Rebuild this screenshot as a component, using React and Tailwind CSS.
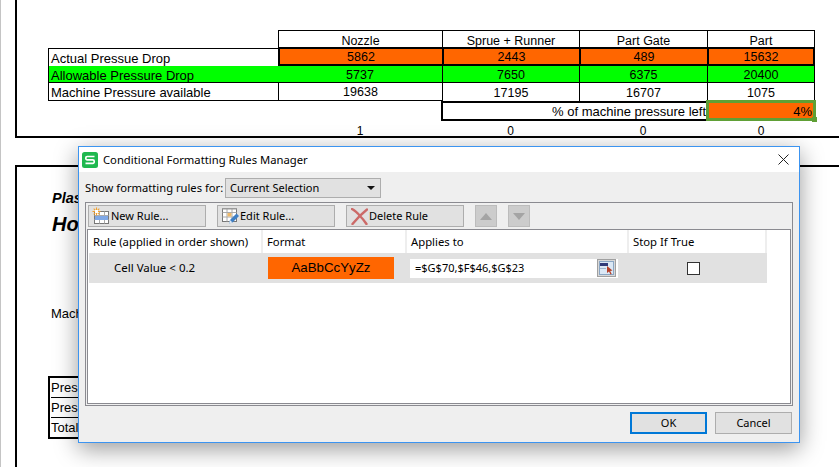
const sheet = { fontFamily: '"Liberation Sans", Arial, sans-serif' };
const ui = { fontFamily: '"Noto Sans", "Open Sans", sans-serif' };

function SheetIcon() {
  return (
    <svg width="16" height="16" viewBox="0 0 16 16">
      <rect width="16" height="16" rx="2.5" fill="#1fb84f" />
      <path d="M12.5 4.5H5.2a1.4 1.4 0 0 0-1.4 1.4v.6a1.4 1.4 0 0 0 1.4 1.4h5.6a1.4 1.4 0 0 1 1.4 1.4v.6a1.4 1.4 0 0 1-1.4 1.4H3.5" fill="none" stroke="#fff" strokeWidth="1.7" />
    </svg>
  );
}

function NewRuleIcon() {
  return (
    <svg width="18" height="18" viewBox="0 0 18 18">
      <rect x="2.5" y="4.5" width="14" height="12" fill="#fff" stroke="#777" />
      <path d="M2.5 8.5h14M2.5 12.5h14M7.5 4.5v12M12.5 4.5v12" stroke="#aaa" />
      <rect x="3" y="9" width="13" height="4" fill="#7fa8e6" />
      <path d="M4.5 0.5v8M0.5 4.5h8M1.7 1.7l5.6 5.6M7.3 1.7L1.7 7.3" stroke="#f0a030" strokeWidth="1.1" />
      <rect x="3" y="3" width="3" height="3" fill="#fff" />
    </svg>
  );
}

function EditRuleIcon() {
  return (
    <svg width="19" height="18" viewBox="0 0 19 18">
      <rect x="1.5" y="1.5" width="14" height="13" fill="#fff" stroke="#777" />
      <path d="M1.5 5.5h14M1.5 10h14M6 1.5v13M11 1.5v13" stroke="#aaa" />
      <rect x="6.5" y="6" width="4" height="3.5" fill="#eeb96a" />
      <rect x="1" y="1" width="15" height="1.5" fill="#999" />
      <path d="M8 16.5l1-3.5 6.5-6.5 2.5 2.5-6.5 6.5z" fill="#3f7fc4" />
      <path d="M8 16.5l1-3.5 2.5 2.5z" fill="#dfe8f2" />
    </svg>
  );
}

function DeleteIcon() {
  return (
    <svg width="17" height="17" viewBox="0 0 17 17">
      <path d="M1 1c3 1.500 6 4.500 8.500 7.500M16 1.500C11.500 5 6 10.500 1.500 16M9 8c2.500 2.500 4.500 5 6.500 8" fill="none" stroke="#cc6a68" strokeWidth="2.400" strokeLinecap="round" />
    </svg>
  );
}

function Triangle({ down }) {
  return (
    <svg width="12" height="7" viewBox="0 0 12 7">
      <path d={down ? "M0 0h12L6 7z" : "M0 7h12L6 0z"} fill="#a4a4a4" />
    </svg>
  );
}

function RefIcon() {
  return (
    <svg width="15" height="14" viewBox="0 0 15 14">
      <rect width="15" height="14" fill="#dbe8f5" />
      <rect x="0.5" y="0.5" width="14" height="13" fill="none" stroke="#8aa6c4" />
      <rect x="1" y="2" width="8" height="3" fill="#303a78" />
      <rect x="1" y="7" width="6" height="1" fill="#9fb4cc" />
      <path d="M8 5l5.500 4.500-2.300.4 1.500 3-1.200.6-1.500-3-2 1.500z" fill="#b5402a" />
    </svg>
  );
}

function ToolButton({ icon, label }) {
  return (
    <div className="flex h-[22px] w-[118px] items-center border border-[#adadad] bg-[#e1e1e1] pl-[2px] text-[11px] text-black">
      <span className="flex w-[20px] justify-center">{icon}</span>
      <span>{label}</span>
    </div>
  );
}

function Row({ children, className }) {
  return <div className={`grid w-[767px] grid-cols-[230px_164px_137px_128px_108px] ${className}`}>{children}</div>;
}

export default function App() {
  return (
    <div className="relative h-[467px] w-[839px] overflow-hidden border-l border-[#c4c4c4] bg-white text-black" style={sheet}>
      <div className="absolute left-[-1px] top-[101px] h-[19px] w-[1px] bg-[#5f9f35]" />

      {/* upper sheet block */}
      <div className="ml-[14px] h-[138px] border-b-2 border-l-2 border-black pl-[31px] pt-[30px] text-[12.500px] leading-none">
        <Row className="h-[17px]">
          <div />
          <div className="flex items-center justify-center border-l border-t border-black pt-[4px]">Nozzle</div>
          <div className="flex items-center justify-center border-l border-t border-black pt-[4px]">Sprue + Runner</div>
          <div className="flex items-center justify-center border-l border-t border-black pt-[4px]">Part Gate</div>
          <div className="flex items-center justify-center border-x border-t border-black pt-[4px]">Part</div>
        </Row>
        <Row className="h-[19px]">
          <div className="mt-px flex items-center border-l border-t border-black pl-[2px] pt-[2px] text-[13px]">Actual Pressue Drop</div>
          <div className="flex items-center justify-center border-y-2 border-l-2 border-black bg-[#ff6600] pt-[2px]">5862</div>
          <div className="flex items-center justify-center border-y-2 border-l-2 border-black bg-[#ff6600] pt-[2px]">2443</div>
          <div className="flex items-center justify-center border-y-2 border-l-2 border-black bg-[#ff6600] pt-[2px]">489</div>
          <div className="flex items-center justify-center border-2 border-black bg-[#ff6600] pt-[2px]">15632</div>
        </Row>
        <Row className="h-[17px]">
          <div className="flex items-center border-b border-l border-black bg-[#00ff00] pl-[2px] pt-[2px] text-[13px]">Allowable Pressure Drop</div>
          <div className="flex items-center justify-center border-b border-black bg-[#00ff00] pt-[3px]">5737</div>
          <div className="flex items-center justify-center border-b border-l border-black bg-[#00ff00] pt-[3px]">7650</div>
          <div className="flex items-center justify-center border-b border-l border-black bg-[#00ff00] pt-[3px]">6375</div>
          <div className="flex items-center justify-center border-x border-b border-black bg-[#00ff00] pt-[3px]">20400</div>
        </Row>
        <Row className="h-[18px]">
          <div className="flex items-center border-b border-l border-black pl-[2px] pt-[2px] text-[13px]">Machine Pressure available</div>
          <div className="flex items-center justify-center border-b border-l border-black pt-[2px]">19638</div>
          <div className="flex items-center justify-center border-l border-black pt-[2px]">17195</div>
          <div className="flex items-center justify-center border-l border-black pt-[2px]">16707</div>
          <div className="flex items-center justify-center border-x border-black pt-[2px]">1075</div>
        </Row>
        <Row className="h-[18px]">
          <div />
          <div />
          <div className="col-span-2 -ml-px flex items-center justify-end border-2 border-r-0 border-black pr-[1px] pt-[1px] text-[13px]">% of machine pressure left</div>
          <div className="relative -ml-px -mt-px flex h-[21px] w-[110px] items-center justify-end border-[3px] border-[#5f9f35] bg-[#ff6600] pr-[1px] pt-[1px] text-[13px]">
            4%
            <div className="absolute bottom-[-4px] right-[-4px] h-[5px] w-[5px] bg-[#5f9f35]" />
          </div>
        </Row>
        <Row className="h-[17px] text-[12px]">
          <div />
          <div className="flex items-center justify-center pt-[6px]">1</div>
          <div className="flex items-center justify-center pt-[6px]">0</div>
          <div className="flex items-center justify-center pt-[6px]">0</div>
          <div className="flex items-center justify-center pt-[6px]">0</div>
        </Row>
      </div>

      {/* lower sheet block, mostly covered by the dialog */}
      <div className="ml-[14px] mt-[27px] h-[302px] border-l-2 border-t-2 border-black pl-[35px] pt-[22px]">
        <div className="text-[14.500px] font-bold italic leading-[18px]">Plas</div>
        <div className="mt-[5px] text-[20px] font-bold italic leading-[24px]">Ho</div>
        <div className="-ml-px mt-[70px] text-[13px] leading-[16px]">Mach</div>
        <div className="-ml-[4px] mt-[54px] w-[200px] border-2 border-black pl-[1px] text-[13px] leading-[19px]">
          <div className="h-[20px] border-b border-black">Pres</div>
          <div className="h-[20px] border-b border-black">Pres</div>
          <div className="h-[19px]">Total</div>
        </div>
      </div>

      {/* dialog */}
      <div className="absolute left-[77px] top-[146px] h-[297px] w-[722px] border border-[#3c94f0] bg-[#efefef] text-[11.500px] text-black shadow-[0_6px_22px_rgba(0,0,0,0.4)]" style={ui}>
        <div className="flex h-[25px] items-center bg-white pl-[3px] pr-[10px]">
          <SheetIcon />
          <span className="ml-[5px] flex-1 text-[11.250px] leading-none">Conditional Formatting Rules Manager</span>
          <svg width="11" height="11" viewBox="0 0 11 11"><path d="M0.500 0.500l10 10M10.500 0.500l-10 10" stroke="#222" strokeWidth="1" /></svg>
        </div>
        <div className="ml-[6px] mt-[6px] flex h-[20px] items-center">
          <span className="w-[140px] whitespace-nowrap text-[11.200px]">Show formatting rules for:</span>
          <div className="flex h-[20px] w-[156px] items-center justify-between border border-[#adadad] bg-[#e1e1e1] pl-[4px] pr-[5px] text-[11px]">
            <span>Current Selection</span>
            <svg width="8" height="4" viewBox="0 0 8 4"><path d="M0 0h8L4 4z" fill="#111" /></svg>
          </div>
        </div>
        <div className="mx-[6px] mt-[4px] h-[204px] border border-[#8a8a90]">
          <div className="flex h-[26px] gap-[11px] pl-[2px] pt-[2px]">
            <ToolButton icon={<NewRuleIcon />} label="New Rule..." />
            <ToolButton icon={<EditRuleIcon />} label="Edit Rule..." />
            <ToolButton icon={<DeleteIcon />} label="Delete Rule" />
            <div className="flex h-[22px] w-[22px] items-center justify-center border border-[#bcbcbc] bg-[#cccccc]"><Triangle /></div>
            <div className="flex h-[22px] w-[22px] items-center justify-center border border-[#bcbcbc] bg-[#cccccc]"><Triangle down /></div>
          </div>
          <div className="ml-px mr-px h-[175px] border border-[#8a8a90] bg-white">
            <div className="ml-px grid h-[23px] w-[678px] grid-cols-[174px_144px_222px_138px] items-center text-[11.300px] text-black">
              <div className="h-full border-r-2 border-[#eeeeee] pl-[4px] leading-[23px]">Rule (applied in order shown)</div>
              <div className="h-full border-r-2 border-[#eeeeee] pl-[4px] leading-[23px]">Format</div>
              <div className="h-full border-r-2 border-[#eeeeee] pl-[4px] leading-[23px]">Applies to</div>
              <div className="h-full border-r-2 border-[#eeeeee] pl-[4px] leading-[23px]">Stop If True</div>
            </div>
            <div className="ml-px grid h-[30px] w-[678px] grid-cols-[174px_144px_222px_138px] items-center bg-[#e1e1e1]">
              <div className="pl-[25px]">Cell Value &lt; 0.2</div>
              <div className="pl-[5px]">
                <div className="flex h-[22px] w-[126px] items-center justify-center bg-[#ff6600] text-[13.300px]" style={sheet}>AaBbCcYyZz</div>
              </div>
              <div className="pl-[3px]">
                <div className="flex h-[19px] w-[208px] items-center justify-between bg-white pl-[5px] pr-[2px] text-[11px]">
                  <span>=$G$70,$F$46,$G$23</span>
                  <span className="flex h-[18px] w-[19px] items-center justify-center border border-[#a0a0a0] bg-[#d8d8d8]"><RefIcon /></span>
                </div>
              </div>
              <div className="pl-[58px]">
                <div className="h-[13px] w-[13px] border border-[#333333] bg-white" />
              </div>
            </div>
          </div>
        </div>
        <div className="mt-[6px] flex justify-end gap-[8px] pr-[7px] text-[11px]">
          <div className="flex h-[22px] w-[77px] items-center justify-center border-2 border-[#0078d7] bg-[#e1e1e1]">OK</div>
          <div className="flex h-[22px] w-[77px] items-center justify-center border border-[#adadad] bg-[#e1e1e1]">Cancel</div>
        </div>
      </div>
    </div>
  );
}
